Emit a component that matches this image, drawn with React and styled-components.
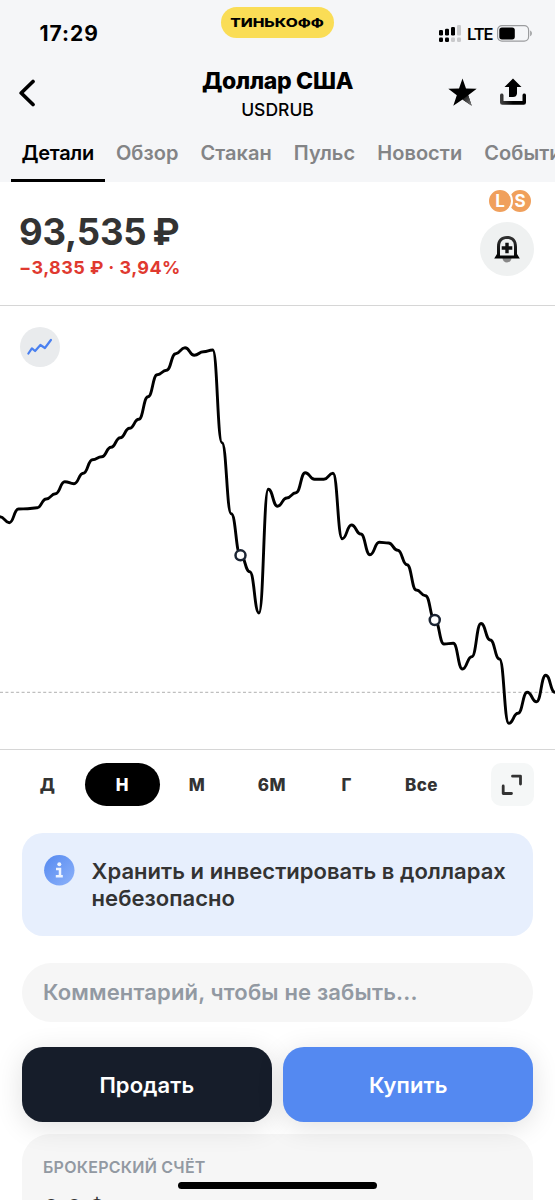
import React from "react";
import styled, { createGlobalStyle } from "styled-components";

const GlobalStyle = createGlobalStyle`
  * { box-sizing: border-box; }
  html, body { margin: 0; padding: 0; background: #fff; }
  body { overflow: hidden; }
  button { font: inherit; color: inherit; border: 0; padding: 0; background: none; }
`;

const Screen = styled.div`
  position: relative;
  width: 555px;
  height: 1200px;
  overflow: hidden;
  display: flex;
  flex-direction: column;
  background: #fff;
  color: #333;
  font-family: Inter, "Liberation Sans", sans-serif;
`;

const Header = styled.header`
  height: 182px;
  flex: none;
  display: flex;
  flex-direction: column;
  background: #f5f6f8;
  color: #000;
`;

const StatusBar = styled.div`
  height: 60px;
  display: grid;
  grid-template-columns: 221px 113px 221px;
  align-items: start;
`;

const Clock = styled.time`
  padding: 21px 0 0 39.5px;
  font-size: 21px;
  line-height: 26px;
  font-weight: 700;
  letter-spacing: 1px;
`;

const BrandPill = styled.div`
  height: 31px;
  margin-top: 7px;
  border-radius: 16px;
  background: #fadd56;
  display: flex;
  align-items: center;
  justify-content: center;
`;

const BrandName = styled.span`
  font-size: 12px;
  line-height: 29px;
  font-weight: 800;
  transform: scaleX(1.3);
`;

const Signals = styled.div`
  display: flex;
  align-items: center;
  padding: 21px 0 0 105px;
  height: 46px;
`;

const Network = styled.span`
  width: 25px;
  margin: 0 5px 0 5px;
  font-size: 16.5px;
  font-weight: 600;
  line-height: 24px;
  letter-spacing: -1.1px;
`;

const TitleBar = styled.div`
  height: 64px;
  display: grid;
  grid-template-columns: 120px 1fr 120px;
`;

const BackButton = styled.button`
  display: flex;
  padding: 19px 0 0 18px;
`;

const TitleBlock = styled.div`
  text-align: center;
  padding-top: 6px;
`;

const Title = styled.h1`
  margin: 0;
  font-size: 23px;
  line-height: 30px;
  font-weight: 800;
  letter-spacing: -0.3px;
`;

const Ticker = styled.div`
  margin-top: 3px;
  font-size: 17.5px;
  line-height: 22px;
  font-weight: 540;
`;

const TitleActions = styled.div`
  display: flex;
  gap: 21.5px;
  padding: 18px 0 0 13px;
`;

const Tabs = styled.nav`
  flex: 1;
  display: flex;
  padding-left: 10.5px;
  overflow: hidden;
`;

const Tab = styled.button`
  flex: none;
  height: 58px;
  padding: 0 11px;
  font-size: 20px;
  line-height: 59px;
  font-weight: 575;
  letter-spacing: ${(p) => p.$spacing ?? 0.05}px;
  color: ${(p) => (p.$active ? "#000" : "#838486")};
  border-bottom: 3px solid ${(p) => (p.$active ? "#000" : "transparent")};
`;

const Quote = styled.section`
  height: 124px;
  flex: none;
  display: flex;
  justify-content: space-between;
  border-bottom: 1px solid #d6d6d6;
`;

const QuoteValues = styled.div`
  padding: 26px 0 0 19px;
`;

const Price = styled.div`
  font-size: 36.5px;
  line-height: 48px;
  font-weight: 650;
  letter-spacing: -0.2px;
  word-spacing: -2.5px;
`;

const Change = styled.div`
  font-size: 18px;
  line-height: 24px;
  font-weight: 650;
  letter-spacing: 0.42px;
  color: #e0392f;
`;

const QuoteSide = styled.div`
  width: 75px;
  padding-top: 6px;
`;

const Badges = styled.div`
  display: flex;
  padding-left: 7px;
`;

const Badge = styled.span`
  width: 26px;
  height: 26px;
  margin-right: -6px;
  border: 2px solid #fff;
  border-radius: 50%;
  background: #f0a05c;
  color: #fff;
  font-size: 17px;
  line-height: 22px;
  font-weight: 700;
  text-align: center;
  position: relative;
  z-index: ${(p) => p.$level};
`;

const BellButton = styled.button`
  width: 54px;
  height: 54px;
  margin-top: 8px;
  border-radius: 50%;
  background: #eff1f1;
  display: flex;
  align-items: center;
  justify-content: center;
`;

const ChartPanel = styled.section`
  position: relative;
  height: 444px;
  flex: none;
  border-bottom: 1px solid #d6d6d6;
  svg { display: block; }
`;

const ChartTypeButton = styled.button`
  position: absolute;
  left: 20px;
  top: 21px;
  width: 40px;
  height: 40px;
  border-radius: 50%;
  background: #e9ebed;
  display: flex;
  align-items: center;
  justify-content: center;
`;

const RangeBar = styled.div`
  height: 83px;
  flex: none;
  display: flex;
  align-items: flex-start;
  padding: 13px 21.4px 0 10px;
`;

const Range = styled.button`
  width: 74.8px;
  height: 43px;
  border-radius: 22px;
  font-size: 17px;
  line-height: 44px;
  font-weight: 780;
  letter-spacing: 0.4px;
  text-align: center;
  background: ${(p) => (p.$active ? "#000" : "transparent")};
  color: ${(p) => (p.$active ? "#fff" : "#333")};
`;

const ExpandButton = styled.button`
  width: 43px;
  height: 43px;
  margin-left: auto;
  border-radius: 10px;
  background: #f5f7f7;
  display: flex;
  align-items: center;
  justify-content: center;
`;

const Notice = styled.section`
  height: 103px;
  flex: none;
  margin: 0 21.6px;
  padding: 22px 0 0 22px;
  border-radius: 21px;
  background: #e7effd;
  display: flex;
  gap: 17px;
`;

const NoticeText = styled.p`
  margin: 3px 0 0;
  font-size: 22px;
  line-height: 27px;
  font-weight: 575;
  letter-spacing: 0.03px;
  white-space: nowrap;
`;

const Comment = styled.div`
  height: 59px;
  flex: none;
  margin: 27px 21.6px 0;
  padding-left: 21.4px;
  border-radius: 30px;
  background: #f6f6f6;
  color: #9299a2;
  font-size: 22px;
  line-height: 59px;
  font-weight: 575;
  letter-spacing: 0.15px;
`;

const TradeButtons = styled.div`
  flex: none;
  display: flex;
  gap: 11px;
  margin: 25px 21.6px 0;
  position: relative;
  z-index: 1;
`;

const TradeButton = styled.button`
  flex: 1;
  height: 75px;
  border-radius: 21px;
  background: ${(p) => p.$color};
  color: #fff;
  font-size: 22px;
  line-height: 76px;
  font-weight: 575;
  letter-spacing: 0.05px;
  box-shadow: 0 5px 28px rgba(0, 0, 0, 0.12);
`;

const Account = styled.section`
  flex: none;
  height: 120px;
  margin: 12px 21.6px 0;
  padding: 22px 0 0 21.4px;
  border-radius: 28px;
  background: #f6f6f6;
`;

const AccountLabel = styled.div`
  font-size: 16px;
  line-height: 22px;
  font-weight: 560;
  letter-spacing: 0.25px;
  color: #9299a2;
`;

const AccountValue = styled.div`
  margin-top: 14px;
  font-size: 25px;
  line-height: 34px;
  font-weight: 600;
`;

const HomeIndicator = styled.div`
  position: absolute;
  z-index: 2;
  left: 178px;
  bottom: 11px;
  width: 199px;
  height: 7px;
  border-radius: 4px;
  background: #000;
`;

const STEP = 9.25;
const levels = [
  516.7, 522.7, 509, 508.7, 507.8, 499, 493.7, 481.7, 483.7, 473.3, 459.7, 456.7,
  447.3, 437.7, 428.3, 419.3, 396.7, 374.7, 370.3, 353.7, 347.7, 355.3, 351.7,
  350, 442.7, 513.7, 555.3, 571.7, 613, 489.3, 506.2, 498, 492.7, 472.7, 479.3,
  479.3, 473.3, 538.7, 525, 534, 554.7, 542.3, 543, 550.3, 564.7, 590, 595.7,
  620, 644, 643.3, 669, 656.7, 623.5, 640, 659, 723.3, 713.3, 692.3, 701.7,
  675.3, 692.3,
].map((y) => y - 306);

const linePath = levels.reduce((d, y, i) => {
  if (i === 0) return `M0 ${y}`;
  const x = i * STEP;
  const mid = x - STEP / 2;
  return `${d} C${mid} ${levels[i - 1]} ${mid} ${y} ${x} ${y}`;
}, "");

const deals = [26, 47];

function PriceChart() {
  return (
    <svg width="555" height="443" viewBox="0 0 555 443">
      <path d="M0 386.3H555" stroke="#bfbfbf" strokeWidth="1.2" strokeDasharray="3 2.4" />
      <path d={linePath} fill="none" stroke="#000" strokeWidth="2.9" strokeLinejoin="round" />
      {deals.map((i) => (
        <circle key={i} cx={i * STEP} cy={levels[i]} r="5" fill="#fff" stroke="#1b2433" strokeWidth="2.5" />
      ))}
    </svg>
  );
}

function SignalIcon() {
  return (
    <svg width="23" height="18" viewBox="0 0 23 18">
      <g fill="#000">
        <rect x="0" y="5" width="4" height="5.5" rx="1.2" />
        <rect x="6" y="3.8" width="4" height="6.7" rx="1.2" />
        <rect x="12" y="2" width="4" height="8.5" rx="1.2" />
        <rect x="0" y="12.5" width="4" height="4.5" rx="1.2" />
        <rect x="6" y="12.5" width="4" height="4.5" rx="1.2" />
      </g>
      <g fill="#c9cacc">
        <rect x="18" y="0" width="4" height="10.5" rx="1.2" />
        <rect x="12" y="12.5" width="4" height="4.5" rx="1.2" />
        <rect x="18" y="12.5" width="4" height="4.5" rx="1.2" />
      </g>
    </svg>
  );
}

function BatteryIcon() {
  return (
    <svg width="36" height="17" viewBox="0 0 36 17">
      <rect x="0.6" y="0.6" width="31" height="15.6" rx="4.4" fill="none" stroke="#9b9c9e" strokeWidth="1.2" />
      <rect x="2.3" y="2.4" width="15.5" height="12" rx="2.6" />
      <path d="M33.2 5.5c2.2 1 2.2 4.8 0 5.8z" fill="#9b9c9e" />
    </svg>
  );
}

function BackIcon() {
  return (
    <svg width="18" height="28" viewBox="0 0 18 28">
      <path d="M15 2.5 3.2 14 15 25.5" fill="none" stroke="#000" strokeWidth="3.7" strokeLinecap="round" strokeLinejoin="round" />
    </svg>
  );
}

function StarIcon() {
  return (
    <svg width="29" height="29" viewBox="0 0 29 29">
      <defs>
        <linearGradient id="starTip" x1="15" y1="18" x2="24" y2="28" gradientUnits="userSpaceOnUse">
          <stop offset="0" stopColor="#111" />
          <stop offset="1" stopColor="#888" />
        </linearGradient>
      </defs>
      <path d="M14.5.5 18 10.500l10.700.3-8.500 6.500 3.500 10.500-9.200-6.200-9.200 6.200L8.800 17.300.3 10.800l10.700-.3z" />
      <path d="M14.500 21.600 20.200 17.300l3.500 10.500z" fill="url(#starTip)" />
    </svg>
  );
}

function ShareIcon() {
  return (
    <svg width="28" height="28" viewBox="0 0 28 28">
      <defs>
        <linearGradient id="tray" x1="0" x2="1">
          <stop offset="0" stopColor="#444" />
          <stop offset="0.5" />
        </linearGradient>
      </defs>
      <path d="M1 17a1.800 1.800 0 0 1 3.500 0V23h19v-6a1.800 1.800 0 0 1 3.500 0V24.500a2.300 2.300 0 0 1-2.300 2.300H3.300A2.300 2.300 0 0 1 1 24.500z" fill="url(#tray)" />
      <path d="M14 .5 22.500 9H18v6.500a4 4 0 0 1-4 3.500h-4V9H5.500z" />
    </svg>
  );
}

function BellIcon() {
  return (
    <svg width="28" height="28" viewBox="0 0 28 28">
      <defs>
        <linearGradient id="bell" x1="0" y1="0" x2="0" y2="1">
          <stop offset="0" stopColor="#343434" />
          <stop offset="1" />
        </linearGradient>
      </defs>
      <path d="M9.500 23h9a4.500 4.500 0 0 1-9 0z" fill="#888" />
      <path d="M4 12C4 4.500 8 1 14 1s10 3.500 10 11v7l2.800 4.500H1.200L4 19z" fill="url(#bell)" />
      <path d="M7 20.500V12c0-5.500 2.500-8 7-8s7 2.500 7 8v8.500z" fill="#eff1f1" />
      <path d="M14 7.700v10.600M8.700 13h10.600" stroke="#111" strokeWidth="3.400" />
    </svg>
  );
}

function InfoIcon() {
  return (
    <svg width="31" height="31" viewBox="0 0 31 31">
      <defs>
        <linearGradient id="info" x1="0" y1="0" x2="1" y2="1">
          <stop offset="0" stopColor="#5589f0" />
          <stop offset="1" stopColor="#8db2fa" />
        </linearGradient>
      </defs>
      <circle cx="15.300" cy="15.200" r="15.200" fill="url(#info)" />
      <circle cx="15.300" cy="9.300" r="2" fill="#eef4ff" />
      <path d="M12 14h4v7.200M11.800 21.200h7" fill="none" stroke="#eef4ff" strokeWidth="2.500" />
    </svg>
  );
}

function ExpandIcon() {
  return (
    <svg width="22" height="22" viewBox="0 0 22 22">
      <path d="M11.5 2.2H19.500V10M2.200 12V19.500H10.500" fill="none" stroke="#333" strokeWidth="2.800" strokeLinecap="round" strokeLinejoin="round" />
    </svg>
  );
}

function TrendIcon() {
  return (
    <svg width="26" height="18" viewBox="0.6 0.5 26 18">
      <path d="M2 16 5.500 10.800 8.700 13.500 14 7.500 18.500 10.500 24.500 2.500" fill="none" stroke="#4a80f0" strokeWidth="2.200" strokeLinecap="round" strokeLinejoin="round" />
    </svg>
  );
}

export default function App() {
  return (
    <Screen>
      <GlobalStyle />
      <Header>
        <StatusBar>
          <Clock>17:29</Clock>
          <BrandPill><BrandName>ТИНЬКОФФ</BrandName></BrandPill>
          <Signals>
            <SignalIcon />
            <Network>LTE</Network>
            <BatteryIcon />
          </Signals>
        </StatusBar>
        <TitleBar>
          <BackButton aria-label="Назад"><BackIcon /></BackButton>
          <TitleBlock>
            <Title>Доллар США</Title>
            <Ticker>USDRUB</Ticker>
          </TitleBlock>
          <TitleActions>
            <StarIcon />
            <ShareIcon />
          </TitleActions>
        </TitleBar>
        <Tabs>
          <Tab $active $spacing={-0.3}>Детали</Tab>
          <Tab>Обзор</Tab>
          <Tab>Стакан</Tab>
          <Tab>Пульс</Tab>
          <Tab>Новости</Tab>
          <Tab>События</Tab>
        </Tabs>
      </Header>
      <Quote>
        <QuoteValues>
          <Price>93,535 ₽</Price>
          <Change>−3,835 ₽ · 3,94%</Change>
        </QuoteValues>
        <QuoteSide>
          <Badges>
            <Badge $level={2}>L</Badge>
            <Badge $level={1}>S</Badge>
          </Badges>
          <BellButton aria-label="Уведомление о цене"><BellIcon /></BellButton>
        </QuoteSide>
      </Quote>
      <ChartPanel>
        <PriceChart />
        <ChartTypeButton aria-label="Тип графика"><TrendIcon /></ChartTypeButton>
      </ChartPanel>
      <RangeBar>
        <Range>Д</Range>
        <Range $active>Н</Range>
        <Range>М</Range>
        <Range>6М</Range>
        <Range>Г</Range>
        <Range>Все</Range>
        <ExpandButton aria-label="Развернуть"><ExpandIcon /></ExpandButton>
      </RangeBar>
      <Notice>
        <InfoIcon />
        <NoticeText>
          Хранить и инвестировать в долларах
          <br />
          небезопасно
        </NoticeText>
      </Notice>
      <Comment>Комментарий, чтобы не забыть...</Comment>
      <TradeButtons>
        <TradeButton $color="#161d2a">Продать</TradeButton>
        <TradeButton $color="#5489f1">Купить</TradeButton>
      </TradeButtons>
      <Account>
        <AccountLabel>БРОКЕРСКИЙ СЧЁТ</AccountLabel>
        <AccountValue>0,0 $</AccountValue>
      </Account>
      <HomeIndicator />
    </Screen>
  );
}
